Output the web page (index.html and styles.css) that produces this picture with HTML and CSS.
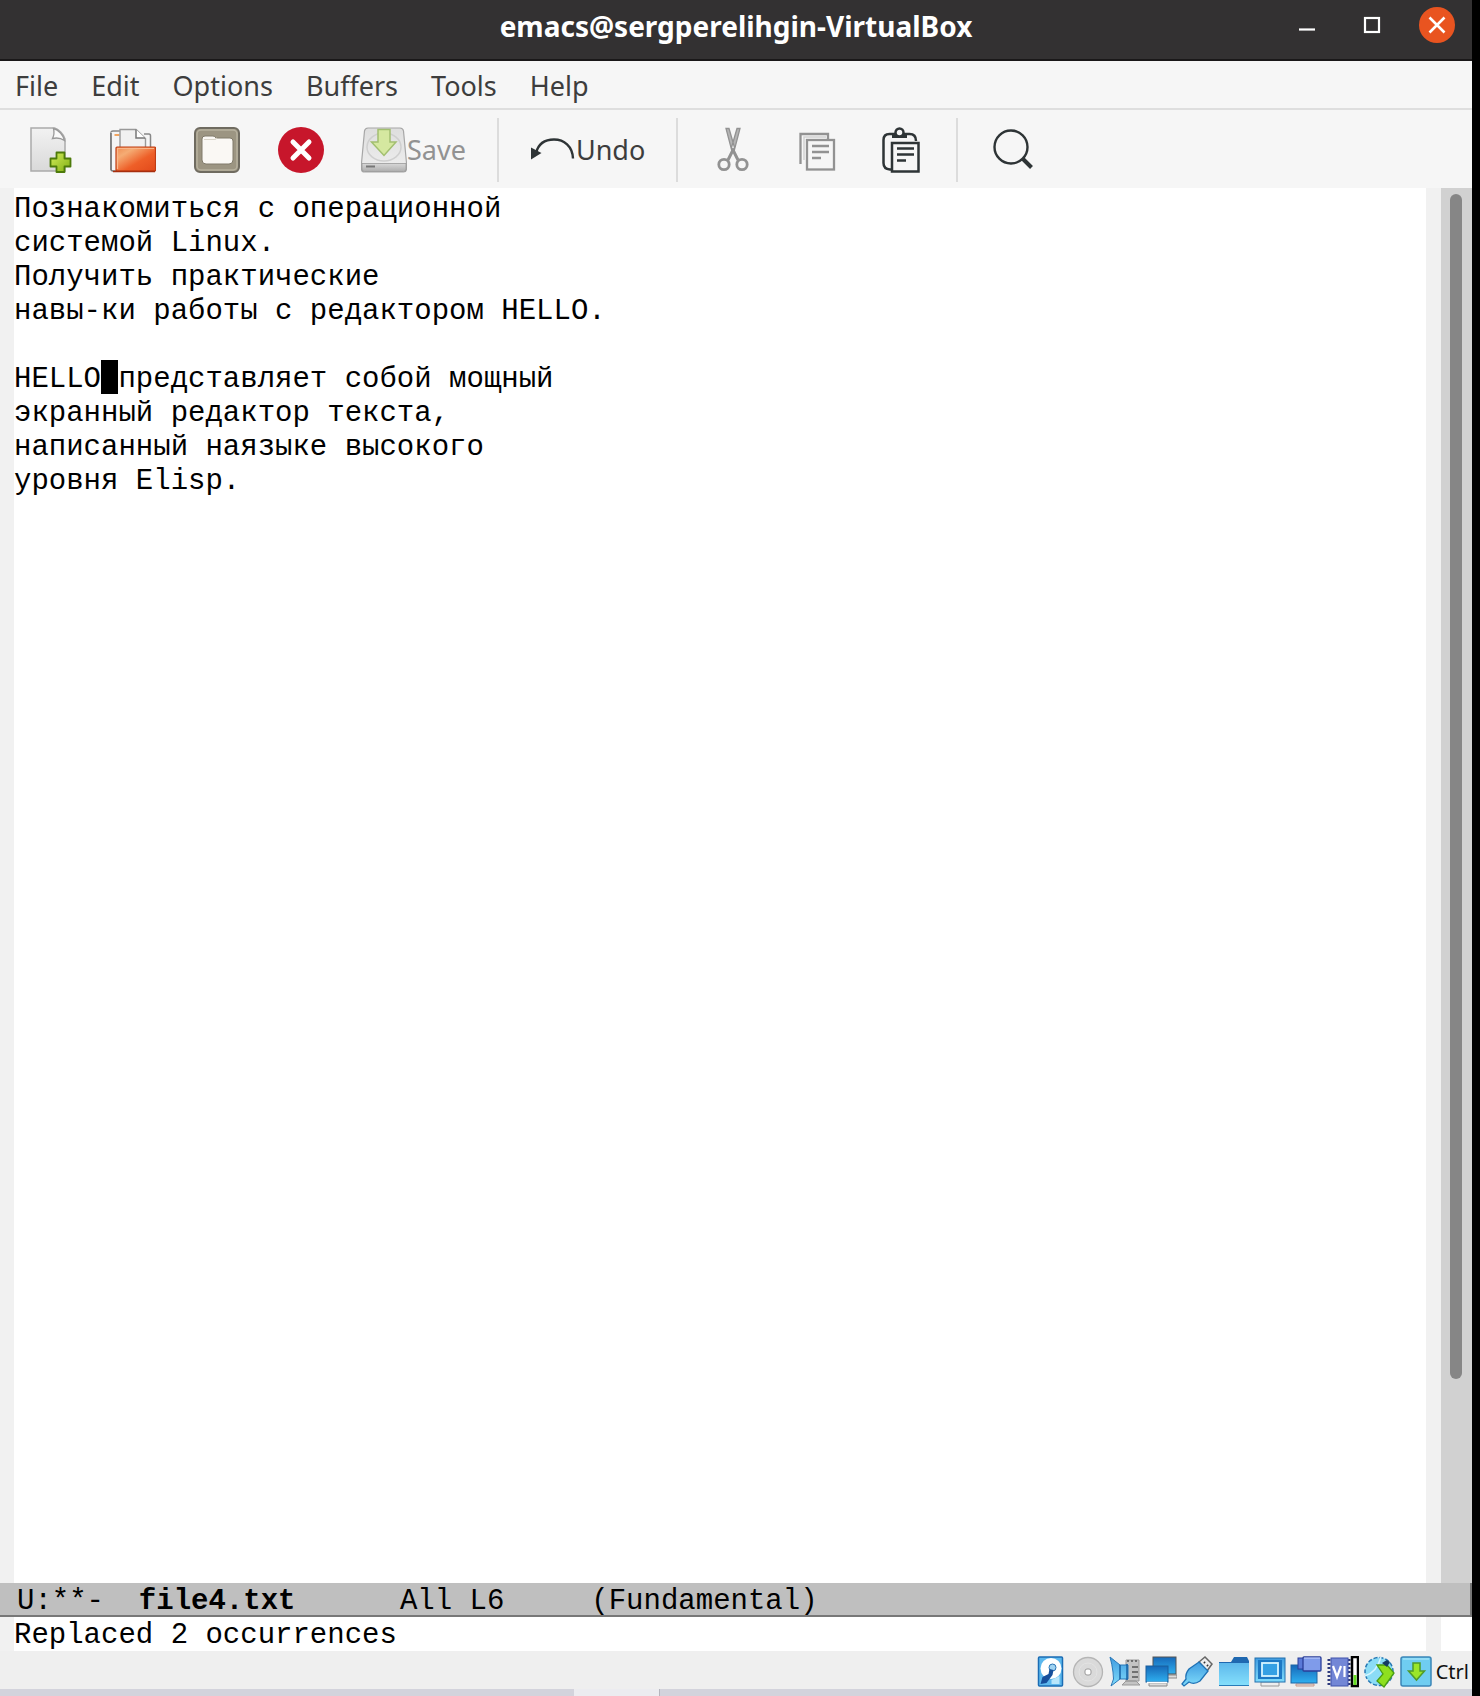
FILE: index.html
```html
<!DOCTYPE html>
<html lang="en">
<head>
<meta charset="utf-8">
<meta name="viewport" content="width=device-width, initial-scale=1">
<title>emacs@sergperelihgin-VirtualBox</title>
<link rel="stylesheet" href="styles.css">
</head>
<body>
<div class="window">
  <header class="titlebar">
    <h1 class="title">emacs@sergperelihgin-VirtualBox</h1>
    <div class="controls">
      <button class="control" aria-label="Minimize"><svg viewBox="0 0 36 36"><path d="M10 22.500h16" stroke="#fff" stroke-width="2.200"/></svg></button>
      <button class="control" aria-label="Maximize"><svg viewBox="0 0 36 36"><rect x="11" y="11" width="14" height="14" fill="none" stroke="#fff" stroke-width="2.200"/></svg></button>
      <button class="control" aria-label="Close"><svg viewBox="0 0 36 36"><circle cx="18" cy="18" r="18" fill="#e95420"/><path d="M10.500 10.500l15 15M25.500 10.500l-15 15" stroke="#fff" stroke-width="2.600"/></svg></button>
    </div>
  </header>

  <nav class="menubar">
    <button class="menu">File</button>
    <button class="menu">Edit</button>
    <button class="menu">Options</button>
    <button class="menu">Buffers</button>
    <button class="menu">Tools</button>
    <button class="menu">Help</button>
  </nav>

  <div class="toolbar" role="toolbar" aria-label="Tools">
    <button class="tool" aria-label="New file"><svg viewBox="0 0 46 46">
      <defs>
        <linearGradient id="paper" x1="0" y1="0" x2="0" y2="1"><stop offset="0" stop-color="#f2f2f2"/><stop offset="1" stop-color="#d9d9d9"/></linearGradient>
        <linearGradient id="plus" x1="0" y1="0" x2="1" y2="1"><stop offset="0" stop-color="#d5ee5a"/><stop offset="1" stop-color="#7fae14"/></linearGradient>
      </defs>
      <g transform="translate(1.500 0)">
      <path d="M3.500 1h23.500c4 1 9 6 10.500 11v32h-34z" fill="url(#paper)" stroke="#aaa" stroke-width="1.500"/>
      <path d="M26 1.500c1 4 0 8-1 10 4-1 9 0 12 2-1-5-6-11-11-12z" fill="#fafafa" stroke="#999" stroke-width="1.300"/>
      <path d="M29 25.500h8v6h6v8h-6v5.500h-8v-5.500h-6v-8h6z" fill="url(#plus)" stroke="#4d7a0a" stroke-width="1.800" stroke-linejoin="round"/>
      </g>
    </svg></button>
    <button class="tool" aria-label="Open file"><svg viewBox="0 0 46 46">
      <defs><linearGradient id="folder" x1="0" y1="0" x2="1" y2="1"><stop offset="0" stop-color="#f08a50"/><stop offset=".25" stop-color="#f5ac74"/><stop offset=".6" stop-color="#ee5f28"/><stop offset="1" stop-color="#e2491a"/></linearGradient></defs>
      <path d="M1 43V6q0-2 2-2h7M34 7h5q1.500 0 1.500 2v11" fill="#f6f6f6" stroke="#888" stroke-width="1.500"/>
      <path d="M1.500 5h10v38h-9z" fill="#f4f4f4"/>
      <path d="M4.500 8h5" stroke="#f0903a" stroke-width="1.600"/>
      <path d="M10 20V2.500h16l9.500 9V20" fill="#f1f1f1" stroke="#999" stroke-width="1.400"/>
      <path d="M26 2.500v8.500h9" fill="#fff" stroke="#777" stroke-width="1.500"/>
      <path d="M1 6v36q0 2 2 2h4" fill="none" stroke="#777" stroke-width="1.500"/>
      <rect x="6" y="20" width="39.500" height="24" rx="1" fill="url(#folder)" stroke="#bf3c13" stroke-width="1.200"/>
      <path d="M7.500 42V21.500H44" fill="none" stroke="#f9b68a" stroke-width="1.200"/>
      <path d="M3 44.500h42" stroke="#a72e0e" stroke-width="1.400"/>
    </svg></button>
    <button class="tool" aria-label="Open directory"><svg viewBox="0 0 46 46">
      <rect x="1" y="1" width="44" height="44" rx="5" fill="#9c9582" stroke="#6f6b60" stroke-width="2"/>
      <rect x="3" y="3" width="40" height="40" rx="4" fill="none" stroke="#b7b19f" stroke-width="1.500"/>
      <path d="M8 12q0-3 3-3h8q2 0 3 2h14q3 0 3 3v19q0 4-4 4H12q-4 0-4-4z" fill="#faf8f4" stroke="#807a6a" stroke-width="1"/>
      <path d="M10 12.500h11l2-1.500" fill="none" stroke="#d9d5ca" stroke-width="1.200"/>
    </svg></button>
    <button class="tool" aria-label="Close file"><svg viewBox="0 0 46 46">
      <circle cx="23" cy="23" r="23" fill="#c7162b"/>
      <path d="M15 15l16 16M31 15L15 31" stroke="#fff" stroke-width="5" stroke-linecap="round"/>
    </svg></button>
    <button class="tool tool-labelled" disabled><svg viewBox="0 0 46 46">
      <defs><linearGradient id="drive" x1="0" y1="0" x2="0" y2="1"><stop offset="0" stop-color="#dedede"/><stop offset="1" stop-color="#efefef"/></linearGradient>
      <linearGradient id="front" x1="0" y1="0" x2="0" y2="1"><stop offset="0" stop-color="#d8d8d8"/><stop offset="1" stop-color="#adadad"/></linearGradient></defs>
      <path d="M7 1h32q3 0 3.500 3l3 32v6q0 3-3 3h-39q-3 0-3-3v-6l3-32q.5-3 3.500-3z" fill="url(#drive)" stroke="#a6a6a6" stroke-width="1.200"/>
      <path d="M1 36.500h44V42q0 2.500-2.500 2.500h-39Q1 44.500 1 42z" fill="url(#front)" stroke="#999" stroke-width=".8"/>
      <ellipse cx="23" cy="20" rx="17" ry="14" fill="none" stroke="#cfcfcf" stroke-width="1.500"/>
      <path d="M5 39.500h9" stroke="#777" stroke-width="2"/>
      <path d="M17 2.500h12V15h6L23 28.500 10.500 15H17z" fill="#d5e8a0" stroke="#a2bf70" stroke-width="1.500"/>
    </svg>Save</button>
    <span class="divider"></span>
    <button class="tool tool-labelled"><svg viewBox="0 0 46 46">
      <path d="M43 31.500C42.500 19 34 12.500 24 12.500 14 12.500 8 18 6 26" fill="none" stroke="#2e3436" stroke-width="2.400"/>
      <path d="M1 20.500l10.500 5.500L1 32.500z" fill="#2e3436"/>
    </svg>Undo</button>
    <span class="divider"></span>
    <button class="tool" aria-label="Cut" disabled><svg viewBox="0 0 46 46" fill="none" stroke="#929292">
      <path d="M16 1.500h3l5.500 19-2.500 4zM30 1.500h-3l-5.500 19 2.500 4z" fill="#b5b5b5" stroke-width="1.300"/>
      <path d="M23.500 22L18 33M22.500 22L28 33" stroke-width="3"/>
      <circle cx="14" cy="37.500" r="5.200" stroke-width="2.800"/><circle cx="32" cy="37.500" r="5.200" stroke-width="2.800"/>
    </svg></button>
    <button class="tool" aria-label="Copy" disabled><svg viewBox="0 0 46 46" fill="none" stroke="#929292" stroke-width="2.300">
      <path d="M6.500 37V7h27.500v5"/><path d="M10 33V10h22" stroke="#d2d2d2" stroke-width="1.500"/>
      <rect x="13" y="13" width="27" height="29.500"/>
      <path d="M18 19h17M18 25h17M18 31h9"/>
    </svg></button>
    <button class="tool" aria-label="Paste"><svg viewBox="0 0 46 46" fill="none" stroke="#2e3436" stroke-width="2.500">
      <path d="M14 42.500h-2Q5.500 42 5.500 36V13q0-6 6-6h20Q38 7 38 14"/>
      <path d="M14 6.500h15v4.500H14z" fill="#2e3436" stroke="none"/>
      <circle cx="21.500" cy="5.500" r="4" fill="#f6f6f6"/>
      <rect x="14" y="16" width="26.500" height="28.500"/>
      <path d="M19 21.500h17M19 27.500h17M19 33.500h9"/>
    </svg></button>
    <span class="divider"></span>
    <button class="tool" aria-label="Search"><svg viewBox="0 0 46 46" fill="none" stroke="#2e3436">
      <circle cx="21" cy="20" r="16.500" stroke-width="2.400"/>
      <path d="M32.500 31.500l9 9" stroke-width="4"/>
    </svg></button>
  </div>

  <main class="buffer">
    <div class="page">
      <textarea class="text" aria-label="file4.txt" spellcheck="false">Познакомиться с операционной
системой Linux.
Получить практические
навы-ки работы с редактором HELLO.

HELLO представляет собой мощный
экранный редактор текста,
написанный наязыке высокого
уровня Elisp.</textarea>
      <span class="cursor"></span>
    </div>
    <div class="scrollbar"><div class="thumb"></div></div>
  </main>

  <div class="modeline">U:**-  <b>file4.txt</b>      All L6     (Fundamental)</div>
  <div class="echo"><output class="message">Replaced 2 occurrences</output></div>

  <footer class="machine">
    <div class="devices">
      <button class="device" aria-label="Hard disks"><svg viewBox="0 0 32 32">
        <defs><linearGradient id="sky" x1="0" y1="0" x2="0" y2="1"><stop offset="0" stop-color="#3f9be0"/><stop offset="1" stop-color="#7fdcfb"/></linearGradient>
        <linearGradient id="deep" x1="0" y1="0" x2="0" y2="1"><stop offset="0" stop-color="#1668b8"/><stop offset="1" stop-color="#2fb0f0"/></linearGradient></defs>
        <g transform="translate(-1.500 0)">
        <rect x="4" y="1" width="24" height="29" rx="1" fill="#5cb8ee" stroke="#1b6cb4" stroke-width="1.500"/>
        <circle cx="16.500" cy="12.500" r="10.500" fill="#fff"/><circle cx="18" cy="11.500" r="3.500" fill="#9fd3f2" stroke="#2c75b5"/>
        <path d="M6 28l2-7 6-3 1-5 4 1-1 5-6 8z" fill="#164f9c"/><path d="M17 24l8-4v8h-8z" fill="#b8e6fb"/>
        </g>
      </svg></button>
      <button class="device" aria-label="Optical drives"><svg viewBox="0 0 32 32">
        <circle cx="16" cy="16" r="14.500" fill="#dadada" stroke="#b5b5b5" stroke-width="1.300"/><circle cx="16" cy="16" r="9" fill="none" stroke="#e3e3e3"/><rect x="13" y="13" width="6" height="6" rx="2" fill="#fff" stroke="#999"/>
      </svg></button>
      <button class="device" aria-label="Audio"><svg viewBox="0 0 32 32">
        <path d="M13 29h18l-4-4H17zM17 4h13v21H17z" fill="#c4c4c4" stroke="#999"/><path d="M18 5h2M22 5h2M26 5h2M23 11h6M23 16h6M23 21h6" stroke="#555" stroke-width="1.500"/>
        <path d="M1 1l10 8h8v14h-8L2 30q4-7 2-14Q3 8 1 1z" fill="url(#sky)" stroke="#2878b8"/><path d="M11 9v14M18 8v16" stroke="#1762a4" stroke-width="1.500"/>
      </svg></button>
      <button class="device" aria-label="Network"><svg viewBox="0 0 32 32">
        <path d="M14 22h18v-3H14zM4 30h18v-3H4z" fill="#ddd" stroke="#888"/><rect x="8" y="1" width="23" height="17" fill="url(#deep)" stroke="#555"/><rect x="1" y="10" width="22" height="16" fill="url(#deep)" stroke="#1a5f9c"/><path d="M2 26.500h20" stroke="#fff" stroke-width="1.500"/>
      </svg></button>
      <button class="device" aria-label="USB"><svg viewBox="0 0 32 32">
        <path d="M18 6l6-5 7 7-5 7z" fill="#eee" stroke="#666" stroke-width="1.500"/><path d="M23 6l1 1M26 9l1 1" stroke="#333" stroke-width="2"/>
        <path d="M18 6l9 9-8 10q-6 4-11 1l-5 4-2-2 4-5q-1-5 3-10z" fill="url(#sky)" stroke="#1f72b5" stroke-width="1.300"/>
      </svg></button>
      <button class="device" aria-label="Shared folders"><svg viewBox="0 0 32 32">
        <path d="M1 6h12l3-5h13l2 4v24H1z" fill="#1f68b0"/><path d="M1 7h30v22H1z" fill="url(#sky)"/><path d="M1 7h30v22H1z" fill="#8be3fc" opacity=".4"/><path d="M1 29.500h30" stroke="#287cb8"/>
      </svg></button>
      <button class="device" aria-label="Display"><svg viewBox="0 0 32 32">
        <path d="M7 30h18v-4H7z" fill="#eee" stroke="#999"/><rect x="1" y="2" width="30" height="24" fill="url(#sky)" stroke="#2371ae"/><rect x="4" y="4" width="24" height="19" fill="#1c78c4"/><rect x="8" y="7" width="16" height="13" fill="#35a0e4" stroke="#d6f4ff" stroke-width="1.800"/>
      </svg></button>
      <button class="device" aria-label="Recording"><svg viewBox="0 0 32 32">
        <path d="M6 30h18v-2H6z" fill="#ddd" stroke="#c98"/><rect x="1" y="9" width="26" height="18" fill="url(#deep)" stroke="#1f66a5"/><rect x="8" y="2" width="15" height="11" fill="#5a79d8" stroke="#2b3f99"/><rect x="13" y="1" width="18" height="14" rx="1" fill="#7f9bea" stroke="#2b3f99" stroke-width="1.300"/><path d="M14 2h16" stroke="#c4d2ff"/>
      </svg></button>
      <button class="device" aria-label="Processor"><svg viewBox="0 0 32 32">
        <path d="M2 3v26M22 3v26" stroke="#2e3a7d" stroke-width="3" stroke-dasharray="2 2"/><rect x="4" y="2" width="17" height="28" fill="#7387d6" stroke="#4153ab"/><path d="M6 10l4 11 4-11M17.500 10v11" fill="none" stroke="#fff" stroke-width="2.200"/><rect x="25" y="1" width="6" height="29" fill="#fff" stroke="#000" stroke-width="2.500"/><path d="M28 19v10" stroke="#65dc20" stroke-width="3"/>
      </svg></button>
      <button class="device" aria-label="Mouse integration"><svg viewBox="0 0 32 32">
        <circle cx="16" cy="15.500" r="14" fill="#8bdcf6" stroke="#2678b4" stroke-width="1.500" stroke-dasharray="4 2"/><path d="M2 20Q14 16 18 1" fill="none" stroke="#d4f5ff" stroke-width="1.500"/>
        <path d="M14 9l10 0 7 8-10 14-7-6 6-7z" fill="#8ee01f" stroke="#4b9d12" stroke-width="1.300"/><path d="M19 7l5-3 3 2-3 5z" fill="#153b63"/>
      </svg></button>
      <button class="device" aria-label="Keyboard capture"><svg viewBox="0 0 32 32">
        <rect x="1" y="1" width="30" height="29" rx="2" fill="#6fcdf1" stroke="#3b86b8" stroke-width="1.500"/><path d="M3 3h26" stroke="#b8ecfd"/>
        <path d="M13 7h7v8h4.500L16.500 24 8.500 15H13z" fill="#9be629" stroke="#4f9b2a" stroke-width="1.500"/>
      </svg></button>
    </div>
    <span class="hostkey">Ctrl</span>
  </footer>
  <div class="taskbar"><span class="task"></span></div>
</div>
</body>
</html>
```
FILE: styles.css
```css
* {
  box-sizing: border-box;
}

body {
  margin: 0;
  padding-right: 8px;
  background: #000;
  color: #3d3d3d;
  font-family: "Noto Sans", sans-serif;
  font-size: 27px;
}

button {
  margin: 0;
  padding: 0;
  border: 0;
  background: none;
  color: inherit;
  font: inherit;
}

svg {
  display: block;
}

.window {
  display: flex;
  flex-direction: column;
  min-height: 100vh;
  background: #f6f6f6;
}

/* Title bar */
.titlebar {
  display: grid;
  grid-template-columns: 1fr auto 1fr;
  align-items: start;
  height: 61px;
  padding: 7px 17px 0;
  background: #333132;
  border-bottom: 2px solid #1a1819;
}

.title {
  grid-column: 2;
  margin: 0;
  color: #fff;
  font-size: 28px;
  font-weight: 700;
  line-height: 38px;
}

.controls {
  display: flex;
  justify-content: flex-end;
  gap: 29px;
}

.control {
  width: 36px;
  height: 36px;
}

/* Menus and tools */
.menubar {
  display: flex;
  gap: 33px;
  height: 49px;
  padding: 0 15px;
  border-bottom: 2px solid #dedede;
}

.menu {
  line-height: 50px;
}

.toolbar {
  display: flex;
  align-items: center;
  height: 78px;
  padding: 1px 7px 0;
}

.tool {
  display: flex;
  align-items: center;
  justify-content: center;
  width: 84px;
  height: 64px;
}

.tool svg {
  flex: none;
  width: 46px;
  height: 46px;
}

.tool-labelled {
  width: auto;
  padding: 0 18px;
}

.tool:disabled {
  color: #929292;
}

.divider {
  width: 2px;
  height: 64px;
  margin: 0 13px;
  background: #dcdcdc;
}

/* Buffer */
.buffer,
.modeline,
.echo {
  color: #000;
  font-family: "Liberation Mono", monospace;
  font-size: 29px;
  line-height: 34px;
}

.buffer {
  display: flex;
  flex: 1;
}

.page {
  position: relative;
  display: flex;
  flex: 1;
  border: solid #f1f1f1;
  border-width: 0 15px 0 14px;
  background: #fff;
}

.text {
  flex: 1;
  padding: 5px 0 0;
  border: 0;
  outline: 0;
  background: none;
  color: inherit;
  font: inherit;
  resize: none;
  overflow: hidden;
}

.cursor {
  position: absolute;
  top: 172px;
  left: 5ch;
  width: 1ch;
  height: 34px;
  background: #000;
}

.scrollbar {
  width: 31px;
  padding: 6px 10px 0 9px;
  background: #d1d1d1;
}

.thumb {
  height: calc(85% + 4px);
  border-radius: 6px;
  background: #868686;
}

.modeline {
  height: 34px;
  padding: 0 0 0 17px;
  border-bottom: 2px solid #777;
  border-right: 2px solid #777;
  background: #bfbfbf;
  line-height: 38px;
  white-space: pre;
}

.echo {
  height: 34px;
  border-left: 14px solid #f1f1f1;
  background: #fff;
}

.message {
  display: block;
  height: 34px;
  margin-right: 31px;
  border-right: 15px solid #f1f1f1;
  line-height: 38px;
}

/* Virtual machine status */
.machine {
  display: flex;
  align-items: center;
  justify-content: flex-end;
  gap: 4px;
  height: 38px;
  padding: 3px 3px 0 0;
  background: #efefef;
}

.devices {
  display: flex;
  justify-content: space-between;
  width: 396px;
}

.device {
  width: 32px;
  height: 32px;
}

.hostkey {
  color: #111;
  font-size: 20px;
}

.taskbar {
  height: 7px;
  background: #d3d3dc;
}

.task {
  display: block;
  width: 86px;
  height: 7px;
  margin-left: 39%;
  border-right: 1px solid #b5b5bd;
  background: #ececf0;
}
```
